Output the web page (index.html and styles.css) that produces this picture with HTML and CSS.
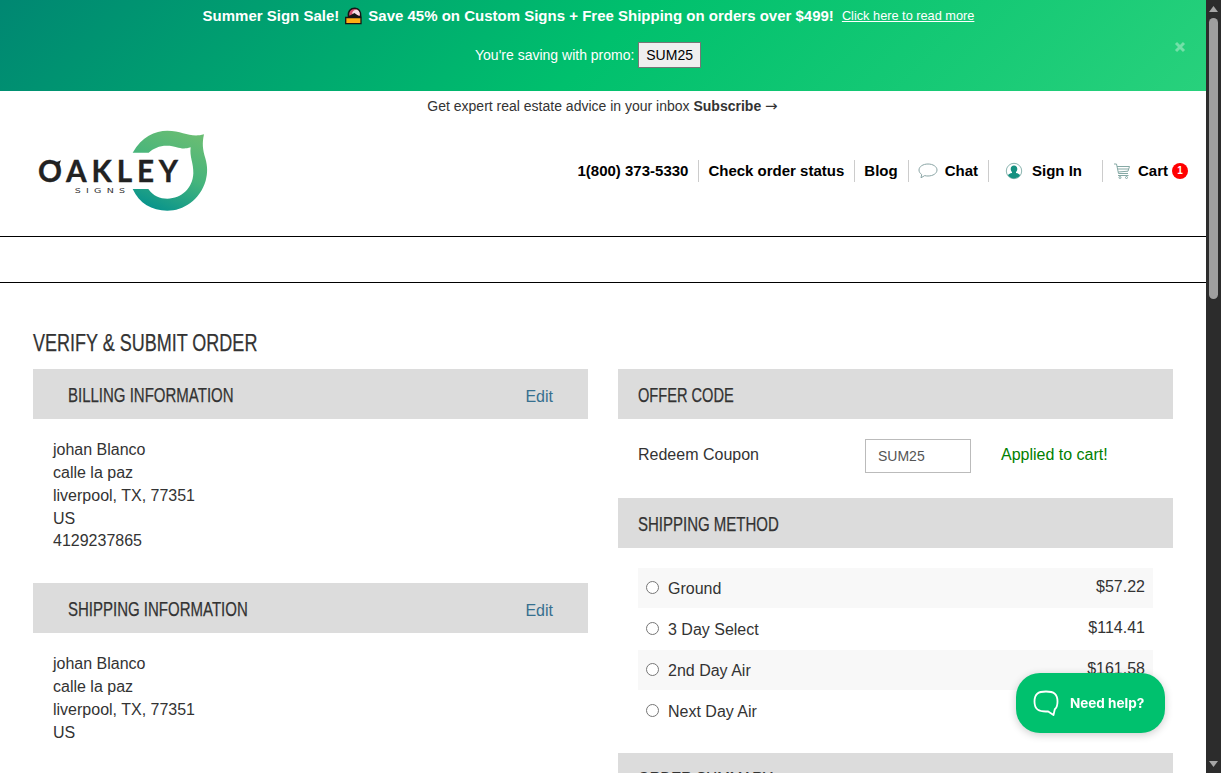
FILE: index.html
```html
<!DOCTYPE html>
<html lang="en">
<head>
  <meta charset="UTF-8" />
  <meta name="viewport" content="width=device-width, initial-scale=1.0"/>
  <title>Verify &amp; Submit Order</title>
  <link rel="stylesheet" href="styles.css">
</head>
<body>
  <div class="page">
    <div class="promo">
      <div class="promo-line">
        <strong>Summer Sign Sale!</strong>
        <svg class="promo-icon" viewBox="0 0 18 18">
          <path d="M4 9.500C3 4 6.500 1 10.500 1.200c4 .3 5.800 3 5.700 8.300z" fill="#d8506f" stroke="#161616" stroke-width="1.500"/>
          <path d="M7.500 6.500c.5-3 3.500-4.300 5.500-3.500 2 1 2.600 3 2.200 5.700z" fill="#f7dce4"/>
          <path d="M4.500 9L10 6l6 4.500H4z" fill="#161616"/>
          <path d="M1.200 10.500h15.300v6.200H1.200z" fill="#ffae14" stroke="#161616" stroke-width="1.300"/>
        </svg>
        <strong>Save 45% on Custom Signs + Free Shipping on orders over $499!</strong>
        <a href="#">Click here to read more</a>
      </div>
      <div class="promo-code">You're saving with promo: <span>SUM25</span></div>
      <svg class="promo-close" viewBox="0 0 12 12"><path d="M2 2l8 8M10 2l-8 8" /></svg>
    </div>

    <div class="subscribe">Get expert real estate advice in your inbox <b>Subscribe <span class="arrow">→</span></b></div>

    <header class="header">
      <svg class="logo" viewBox="0 0 600 300">
        <defs>
          <linearGradient id="leaf" x1="0.3" y1="1" x2="0.7" y2="0">
            <stop offset="0" stop-color="#07938c"/>
            <stop offset="0.5" stop-color="#45b47c"/>
            <stop offset="1" stop-color="#69bd73"/>
          </linearGradient>
        </defs>
        <path fill="url(#leaf)" d="M338 98C365 50 405 32 442 32C490 32 510 55 552 43C546 70 548 88 556 115C563 140 563 160 557 182C540 240 490 272 442 272C395 272 358 250 338 207L385 207C400 228 420 236 442 236C485 236 518 205 520 160C521 130 508 110 512 82C480 92 475 77 440 77C418 77 400 85 386 98Z"/>
        <path d="M95 124Q108 130 123 121Q116 132 119 145z" fill="#222"/>
        <text class="logo-name" x="54" y="185" textLength="420">OAKLEY</text>
        <text class="logo-sub" transform="translate(164 220) scale(1.5 1)" textLength="101">SIGNS</text>
      </svg>
      <nav class="nav">
        <a href="#" class="phone">1(800) 373-5330</a>
        <a href="#" class="status">Check order status</a>
        <a href="#" class="blog">Blog</a>
        <a href="#" class="chat">
          <svg width="20" height="18" viewBox="0 0 20 18"><path d="M10 2c5 0 9 2.600 9 6s-4 6-9 6c-1.200 0-2.300-.1-3.300-.4L3 15.800l.7-3.300C2 11.400 1 9.800 1 8c0-3.400 4-6 9-6z" fill="none" stroke="#8aa5a5"/></svg>
          Chat
        </a>
        <a href="#" class="signin">
          <svg width="18" height="18" viewBox="0 0 18 18"><circle cx="9" cy="9" r="7.700" fill="#fff" stroke="#8bb5b0"/><path d="M9 3.500c2 0 3.300 1.500 3.300 3.500 0 1.400-.6 2.500-1.300 3.100v.9c2 .4 3.800 1.100 4 2.600C13.500 15.500 11 16.500 9 16.500s-4.500-1-6-2.900c.2-1.500 2-2.200 4-2.600v-.9C6.300 9.500 5.700 8.400 5.700 7c0-2 1.300-3.500 3.300-3.500z" fill="#159080"/></svg>
          Sign In
        </a>
        <a href="#" class="cart">
          <svg width="18" height="18" viewBox="0 0 18 18" fill="none" stroke="#86a9a5"><path d="M1 2h2.500l2 9.500h9.500M4 4.500h12.500l-1.500 4.700-9.800.8M4.700 7h11M5 13.500h10.500"/><circle cx="7" cy="15.500" r="1"/><circle cx="13.500" cy="15.500" r="1"/></svg>
          Cart<span class="badge">1</span>
        </a>
      </nav>
    </header>
    <div class="menu-bar"></div>

    <main class="main">
      <h1><span class="narrow">VERIFY &amp; SUBMIT ORDER</span></h1>
      <div class="columns">
        <div class="col">
          <div class="bar bar-edit"><h2 class="narrow">BILLING INFORMATION</h2><a href="#">Edit</a></div>
          <div class="address">
            johan Blanco<br>
            calle la paz<br>
            liverpool, TX, 77351<br>
            US<br>
            4129237865
          </div>
          <div class="bar bar-edit"><h2 class="narrow">SHIPPING INFORMATION</h2><a href="#">Edit</a></div>
          <div class="address">
            johan Blanco<br>
            calle la paz<br>
            liverpool, TX, 77351<br>
            US
          </div>
        </div>
        <div class="col">
          <div class="bar"><h2 class="narrow offer">OFFER CODE</h2></div>
          <div class="coupon">
            <label for="coupon">Redeem Coupon</label>
            <input type="text" id="coupon" value="SUM25" />
            <span class="applied">Applied to cart!</span>
          </div>
          <div class="bar"><h2 class="narrow">SHIPPING METHOD</h2></div>
          <div class="methods">
            <label class="method"><input type="radio" name="ship" /> <em>Ground</em> <span>$57.22</span></label>
            <label class="method"><input type="radio" name="ship" /> <em>3 Day Select</em> <span>$114.41</span></label>
            <label class="method"><input type="radio" name="ship" /> <em>2nd Day Air</em> <span>$161.58</span></label>
            <label class="method"><input type="radio" name="ship" /> <em>Next Day Air</em></label>
          </div>
          <div class="bar"><h2 class="narrow">ORDER SUMMARY</h2></div>
        </div>
      </div>
    </main>
  </div>

  <div class="scrollbar">
    <svg width="9" height="6" viewBox="0 0 9 6"><path d="M4.500 0L9 6H0z" fill="#a5a5a5"/></svg>
    <div class="thumb"></div>
    <svg width="9" height="6" viewBox="0 0 9 6"><path d="M0 0h9L4.500 6z" fill="#a5a5a5"/></svg>
  </div>

  <button class="help">
    <svg width="28" height="28" viewBox="0 0 28 28"><path d="M14 2.500c8 0 11.500 2.500 11.500 10 0 4-.8 6.300-2.700 7.800L21.500 26l-5.300-3.600c-9.700.6-13.700-2-13.700-9.900 0-7.500 3.500-10 11.500-10z" fill="none" stroke="#fff" stroke-width="1.800" stroke-linejoin="round"/></svg>
    Need help?
  </button>
</body>
</html>
```
FILE: styles.css
```css
* {
  box-sizing: border-box;
}

body {
  margin: 0;
  height: 773px;
  display: flex;
  overflow: hidden;
  font-family: 'Liberation Sans', Arial, sans-serif;
  font-size: 16px;
  line-height: 1.42857;
  color: #333;
  background: #fff;
}

.page {
  flex: 1;
  height: 773px;
  overflow: hidden;
}

/* promo banner */
.promo {
  position: relative;
  height: 91px;
  padding-top: 5px;
  background: linear-gradient(135deg, #008772 0%, #00c06d 50%, #28d17c 100%);
  color: #fff;
  text-align: center;
}

.promo-line {
  display: flex;
  justify-content: center;
  align-items: center;
  height: 22px;
  font-size: 15px;
  padding-right: 29px;
}

.promo-icon {
  width: 19px;
  height: 18px;
  margin: 0 5px;
}

.promo-line a {
  margin: 1px 0 0 8px;
  font-size: 12.75px;
  color: #fff;
}

.promo-code {
  margin-top: 15px;
  padding-right: 30px;
  font-size: 14px;
  line-height: 26px;
}

.promo-code span {
  display: inline-block;
  padding: 0 7px;
  border: 1px solid #767676;
  background: #efefef;
  color: #000;
  line-height: 24px;
}

.promo-close {
  position: absolute;
  top: 41px;
  right: 20px;
  width: 12px;
  height: 12px;
  stroke: #73e0a8;
  stroke-width: 3;
}

.subscribe {
  height: 29px;
  padding: 6px 1px 0 0;
  font-size: 14px;
  text-align: center;
}

.arrow {
  font-family: 'DejaVu Sans', sans-serif;
  font-size: 15px;
  font-weight: normal;
  line-height: 1;
}

/* header */
.header {
  display: flex;
  justify-content: space-between;
  height: 117px;
  padding: 0 18px 0 20px;
  border-bottom: 1px solid #000;
}

.logo {
  width: 200px;
  height: 100px;
}

.logo-name {
  font-family: Lato, sans-serif;
  font-weight: 700;
  font-size: 89px;
  fill: #222;
  stroke: #222;
  stroke-width: 1px;
}

.logo-sub {
  font-family: 'DejaVu Sans', sans-serif;
  font-size: 19px;
  fill: #333;
}

.nav {
  display: flex;
  height: 22px;
  margin-top: 40px;
  font-size: 15px;
  font-weight: bold;
}

.nav a {
  display: flex;
  align-items: center;
  color: #000;
  text-decoration: none;
  border-left: 1px solid #ccc;
  padding: 0 10px 0 9px;
}

.nav svg {
  margin-right: 7px;
}

.nav .phone {
  border-left: 0;
}

.nav .signin {
  padding: 0 20px 0 16px;
}

.nav .signin svg {
  margin-right: 9px;
}

.nav .cart {
  padding: 0 0 0 10px;
}

.badge {
  width: 16px;
  height: 16px;
  margin-left: 4px;
  border-radius: 50%;
  background: #f00;
  color: #fff;
  font-size: 10px;
  line-height: 16px;
  text-align: center;
}

.menu-bar {
  height: 46px;
  border-bottom: 1px solid #000;
}

/* checkout */
.main {
  padding: 0 33px;
}

h1,
h2 {
  margin: 0;
  font-weight: normal;
}

h1 {
  height: 86px;
  padding-top: 43px;
  font-size: 24px;
}

h2 {
  font-size: 20px;
}

.narrow {
  display: inline-block;
  transform: scaleX(0.75);
  transform-origin: left;
  white-space: nowrap;
  -webkit-text-stroke: 0.25px #333;
}

.offer {
  transform: scaleX(0.73);
}

.columns {
  display: flex;
  gap: 30px;
}

.col {
  width: 555px;
}

.bar {
  display: flex;
  align-items: center;
  height: 50px;
  padding: 2px 20px 0;
  background: #dcdcdc;
}

.bar-edit {
  justify-content: space-between;
  padding: 2px 35px 0;
}

.bar a {
  color: #36708f;
  padding-top: 4px;
  text-decoration: none;
}

.address {
  height: 164px;
  padding: 20px 20px 0;
}

.coupon {
  display: flex;
  height: 79px;
  padding: 20px 20px 0;
  line-height: 31px;
}

.coupon label {
  width: 227px;
}

.coupon input {
  width: 106px;
  height: 34px;
  padding: 0 12px;
  border: 1px solid #bbb;
  font-family: inherit;
  font-size: 14px;
  color: #555;
}

.applied {
  margin-left: 30px;
  color: #008000;
}

.methods {
  height: 205px;
  padding: 20px 20px 0;
}

.method {
  display: flex;
  align-items: center;
  height: 40px;
  margin-bottom: 1px;
  padding: 0 8px;
}

.method:nth-child(odd) {
  background: #f8f8f8;
}

.method input {
  width: 13px;
  height: 13px;
  margin: 0 9px 1px 0;
}

.method em {
  padding-top: 2px;
  font-style: normal;
}

.method span {
  margin: 0 0 2px auto;
}

/* window scrollbar */
.scrollbar {
  display: flex;
  flex-direction: column;
  align-items: center;
  width: 15px;
  height: 773px;
  padding: 6px 0;
  background: #2c2c2c;
}

.thumb {
  width: 9px;
  height: 281px;
  margin: 6px 0 auto;
  border-radius: 5px;
  background: #9f9f9f;
}

.help {
  position: fixed;
  top: 673px;
  left: 1016px;
  display: flex;
  align-items: center;
  width: 149px;
  height: 60px;
  padding: 0 0 0 16px;
  border: 0;
  border-radius: 24px;
  background: #00c16e;
  box-shadow: 0 2px 8px rgba(0, 0, 0, 0.2);
  color: #fff;
  font-family: Inter, sans-serif;
  font-size: 13.5px;
  font-weight: bold;
}

.help svg {
  margin-right: 10px;
}
```
